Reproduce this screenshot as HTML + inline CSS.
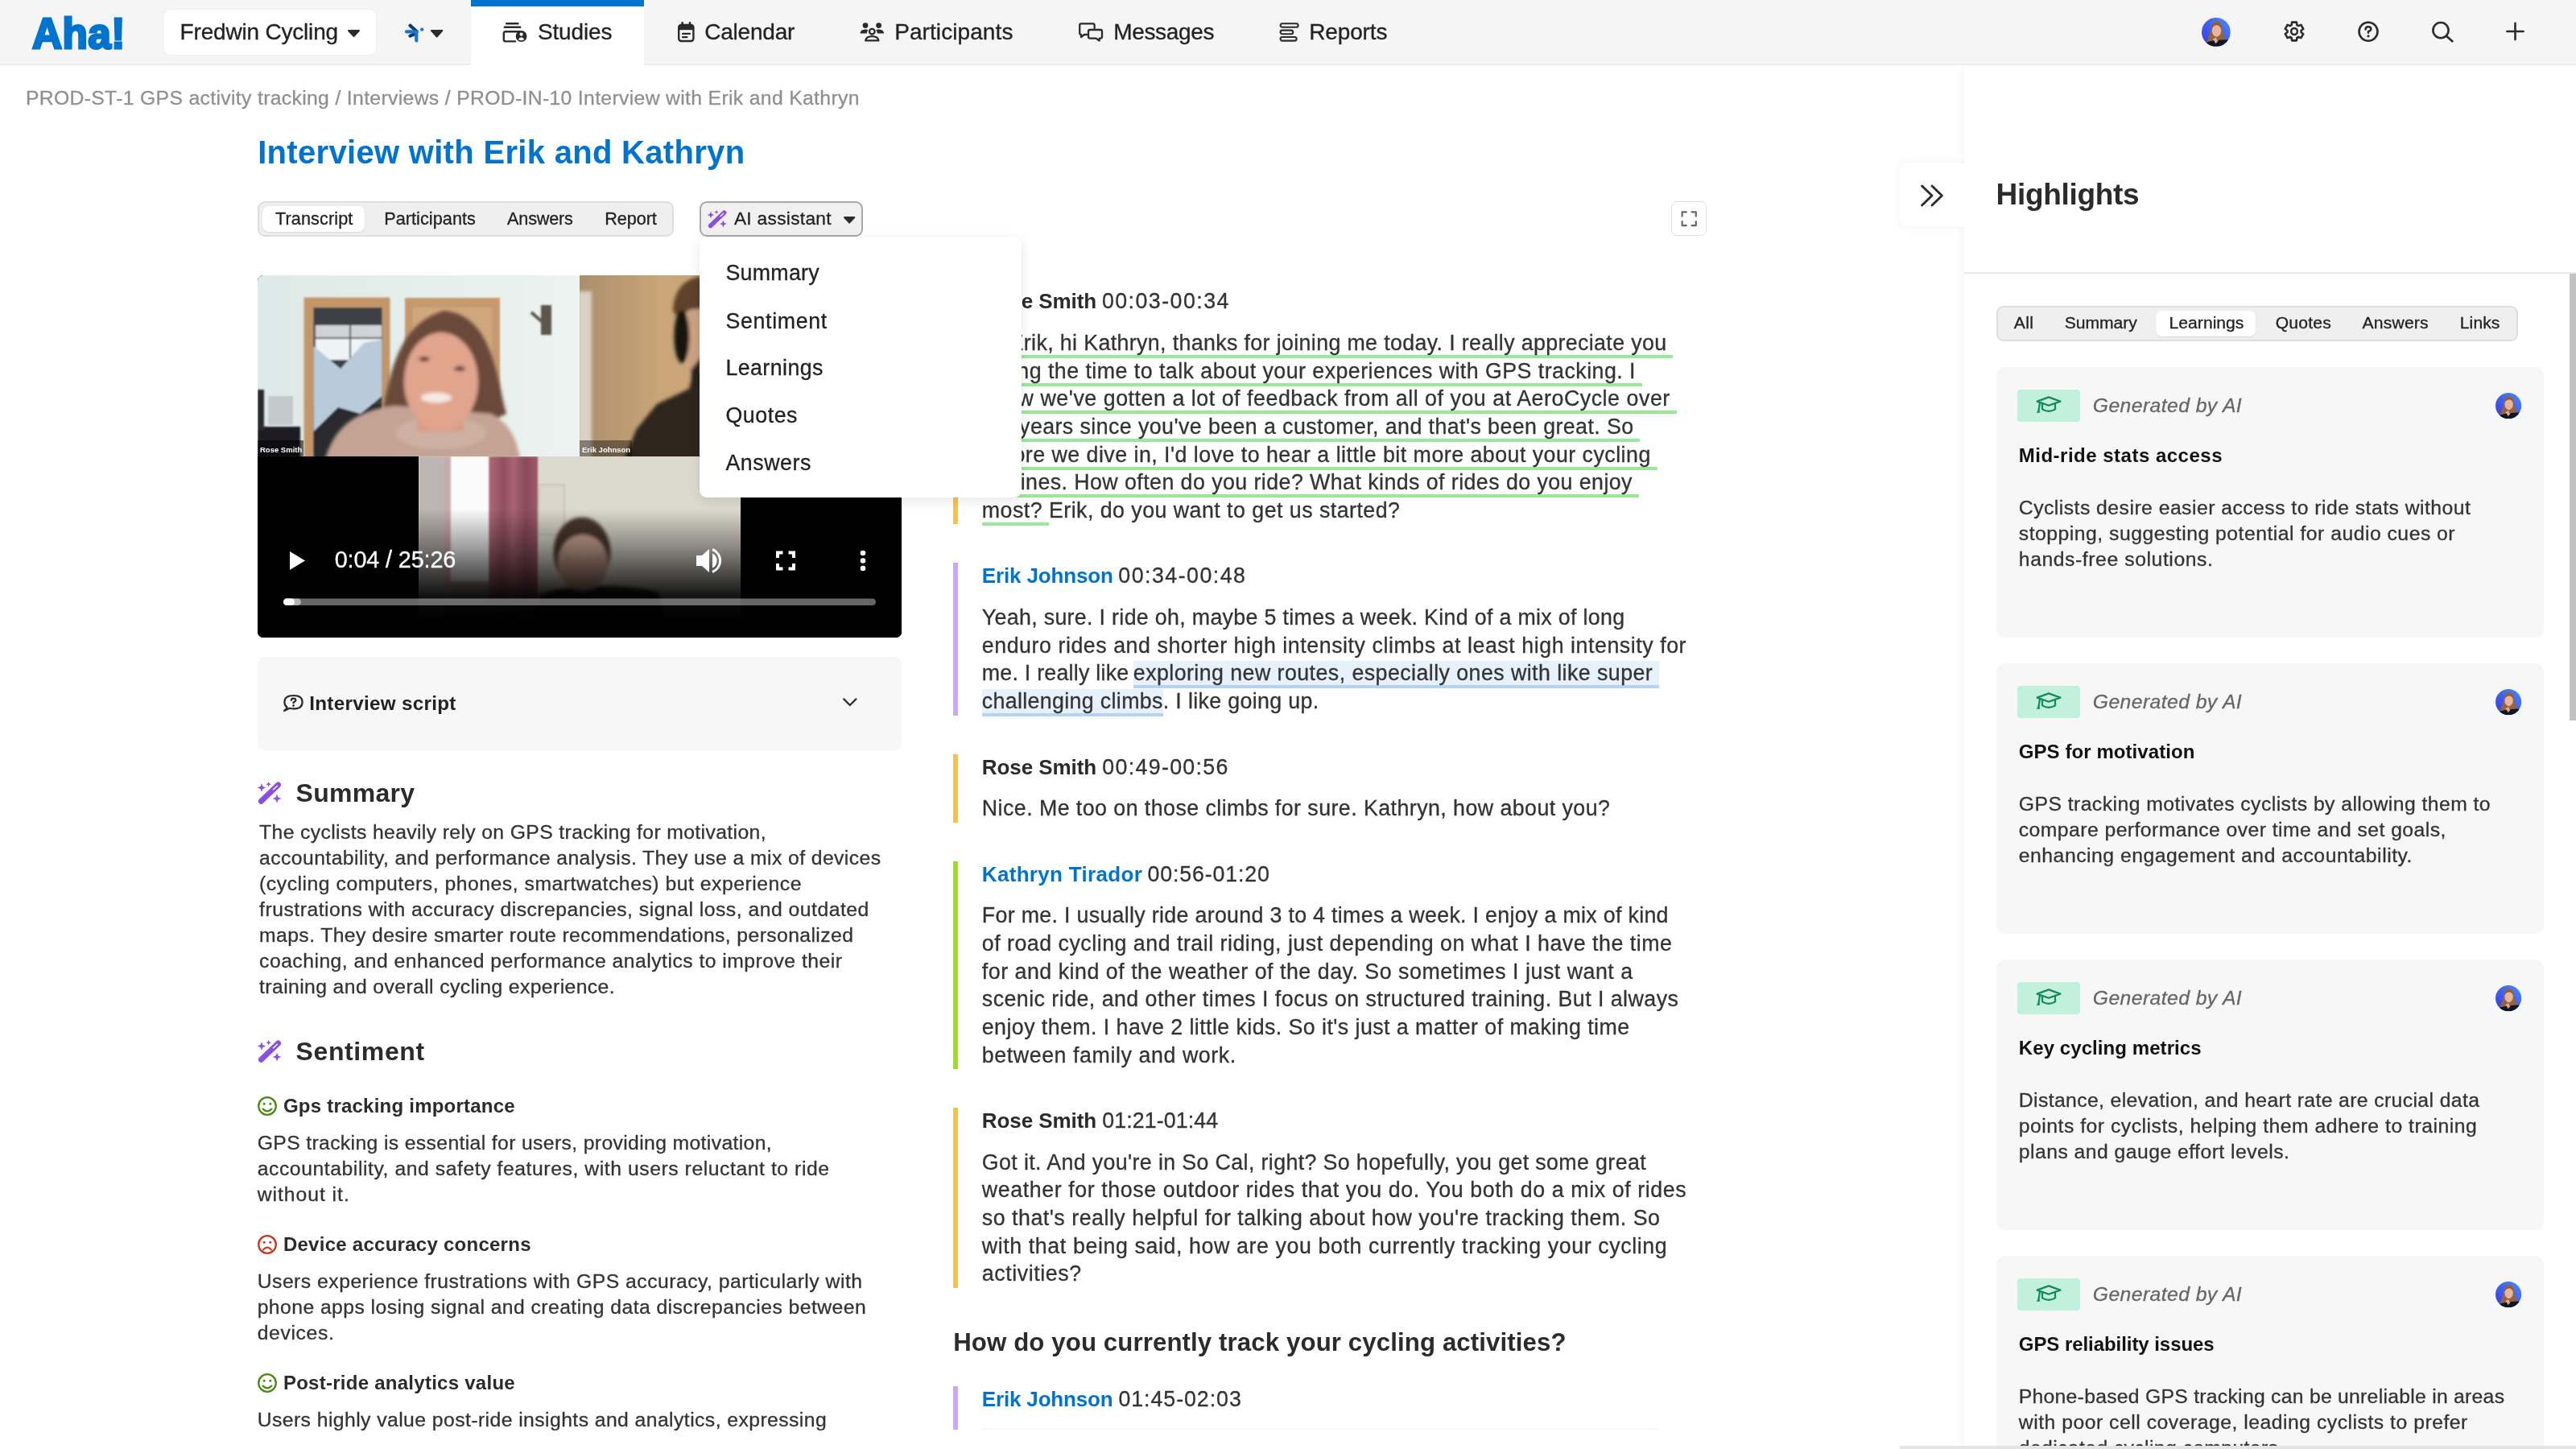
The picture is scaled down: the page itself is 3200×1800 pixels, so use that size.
<!DOCTYPE html>
<html lang="en"><head><meta charset="utf-8"><title>Interview with Erik and Kathryn</title>
<style>
*{box-sizing:border-box;margin:0;padding:0}
html,body{width:3200px;height:1800px;overflow:hidden;background:#fff}
body{position:relative;font-family:"Liberation Sans",sans-serif;color:#333}
.t{position:absolute;white-space:pre;z-index:5;-webkit-text-stroke:.3px}
.a{position:absolute}
.g{border-bottom:4px solid #97ea97;padding-bottom:0}
.b{background:#e7f1fb;border-bottom:4px solid #b5d3f2;padding:0}
svg{position:absolute;overflow:visible}
.bar{position:absolute;left:1184px;width:6px}
.card{position:absolute;left:2480px;width:680px;height:336px;background:#f7f7f7;border-radius:10px}
.badge{position:absolute;left:2506px;width:78px;height:40px;background:#c2f0dc;border-radius:4px}
</style></head><body><div id="root" style="position:absolute;left:0;top:0;width:3200px;height:1800px;will-change:transform">

<!-- NAV -->
<div class="a" style="left:0;top:0;width:3200px;height:81px;background:#f5f5f5;border-bottom:2px solid #ececec"></div>
<div class="a" style="left:585px;top:0;width:215px;height:82px;background:#fff;border-top:8px solid #0073cf"></div>
<div class="a" style="left:204px;top:12px;width:263px;height:56px;background:#fff;border-radius:8px;box-shadow:0 0 2px rgba(0,0,0,.08)"></div>
<div class="a" style="left:40px;top:10.7px;font-size:54px;line-height:60px;font-weight:700;color:#0073cf;letter-spacing:.5px;-webkit-text-stroke:3px #0073cf;transform:scaleX(.95);transform-origin:left;white-space:pre;z-index:6">Aha!</div>
<svg class="a" style="left:431.5px;top:36.5px;z-index:6" width="15.0" height="8.5" viewBox="0 0 15.0 8.5" ><path d="M1 1 L14.0 1 L7.50 8.0 Z" fill="#2b2b2b" stroke="#2b2b2b" stroke-width="2" stroke-linejoin="round"/></svg>
<svg class="a" style="left:500px;top:26px;z-index:6" width="32" height="30" viewBox="0 0 32 30" ><g fill="none" stroke-linecap="round" stroke-width="4.200">
<path d="M9.500 5.800 L17.600 13" stroke="#0b3a75"/><path d="M9.500 18.600 L16.300 15.800" stroke="#0b3a75"/>
<path d="M5 13.300 L17.600 13.600" stroke="#1a74d8"/><path d="M17.300 14.500 L17.300 24.600" stroke="#1a74d8"/></g>
<circle cx="24.200" cy="10.600" r="2.200" fill="#1a74d8"/></svg>
<svg class="a" style="left:534.5px;top:37px;z-index:6" width="15.3" height="9" viewBox="0 0 15.3 9" ><path d="M1 1 L14.3 1 L7.65 8.5 Z" fill="#2b2b2b" stroke="#2b2b2b" stroke-width="2" stroke-linejoin="round"/></svg>
<svg class="a" style="left:622px;top:26px;z-index:6" width="36" height="30" viewBox="0 0 36 30" ><g fill="none" stroke="#2b2b2b" stroke-width="2.400" stroke-linecap="round">
<path d="M7.200 3.200 L21.400 3.200"/><path d="M4.800 7.700 L24.200 7.700"/>
<path d="M18 25.400 L6.200 25.400 Q3.800 25.400 3.800 23 L3.800 15.600 Q3.800 13.200 6.200 13.200 L22.600 13.200 Q24.600 13.200 25 14"/></g>
<circle cx="25.600" cy="19" r="6.900" fill="#2b2b2b"/><circle cx="25.600" cy="16.600" r="2.100" fill="#fff"/><path d="M21.800 23 Q25.600 17.400 29.400 23 Q25.600 25.600 21.800 23Z" fill="#fff"/></svg>
<svg class="a" style="left:840px;top:26px;z-index:6" width="26" height="28" viewBox="0 0 26 28" ><rect x="3.200" y="5" width="18.200" height="20" rx="3" fill="none" stroke="#2b2b2b" stroke-width="2.400"/>
<rect x="3.200" y="5" width="18.200" height="6.200" fill="#2b2b2b"/><path d="M7.600 2.400 L7.600 6 M17 2.400 L17 6" stroke="#2b2b2b" stroke-width="2.600" stroke-linecap="round"/>
<path d="M8 15.800 L17 15.800 M8 20.200 L13.400 20.200" stroke="#2b2b2b" stroke-width="2.200" stroke-linecap="round"/></svg>
<svg class="a" style="left:1066px;top:26px;z-index:6" width="34" height="28" viewBox="0 0 34 28" ><circle cx="9" cy="5.600" r="3.400" fill="#2b2b2b"/><circle cx="25.600" cy="5.600" r="3.400" fill="#2b2b2b"/>
<path d="M2.400 15.400 Q3 10.600 9 10.400 Q11.600 10.400 12.400 11.400 Q10.600 13.400 11 15.400 Z" fill="#2b2b2b"/>
<path d="M32.200 15.400 Q31.600 10.600 25.600 10.400 Q23 10.400 22.200 11.400 Q24 13.400 23.600 15.400 Z" fill="#2b2b2b"/>
<circle cx="17.300" cy="13.200" r="3.300" fill="none" stroke="#2b2b2b" stroke-width="2.300"/>
<path d="M9.200 24.400 Q10 19.200 17.300 19.200 Q24.600 19.200 25.400 24.400 Z" fill="none" stroke="#2b2b2b" stroke-width="2.300" stroke-linejoin="round"/></svg>
<svg class="a" style="left:1338px;top:26px;z-index:6" width="34" height="28" viewBox="0 0 34 28" ><g fill="none" stroke="#2b2b2b" stroke-width="2.300" stroke-linejoin="round" stroke-linecap="round">
<path d="M12 17 L9 17 L5 20 L5 17 Q3.200 17 3.200 15 L3.200 5.400 Q3.200 3.400 5.200 3.400 L19.600 3.400 Q21.600 3.400 21.600 5.400 L21.600 9"/>
<path d="M16 11 L29 11 Q31 11 31 13 L31 19.600 Q31 21.600 29 21.600 L27.600 21.600 L27.600 24.600 L23.400 21.600 L16 21.600 Q14 21.600 14 19.600 L14 13 Q14 11 16 11Z"/></g></svg>
<svg class="a" style="left:1588px;top:26px;z-index:6" width="28" height="28" viewBox="0 0 28 28" ><g fill="none" stroke="#2b2b2b" stroke-width="2.100">
<rect x="2.600" y="3.200" width="22" height="4.600" rx="2.300"/><rect x="2.600" y="11.600" width="15.600" height="4.600" rx="2.300"/><rect x="2.600" y="20" width="20" height="4.600" rx="2.300"/></g></svg>
<svg class="a" style="left:2735.1px;top:22.0px;z-index:6" width="35.8" height="35.8" viewBox="0 0 35.8 35.8" ><defs><clipPath id="av275339"><circle cx="17.9" cy="17.9" r="17.9"/></clipPath>
<linearGradient id="ag275339" x1="1" y1="0" x2="0" y2="1"><stop offset="0" stop-color="#4a8af8"/><stop offset=".5" stop-color="#3f62f0"/><stop offset="1" stop-color="#3636e4"/></linearGradient>
<filter id="af275339" x="-20%" y="-20%" width="140%" height="140%"><feGaussianBlur stdDeviation=".5"/></filter></defs>
<g clip-path="url(#av275339)"><g transform="scale(0.994)"><rect width="36" height="36" fill="url(#ag275339)"/>
<g filter="url(#af275339)"><path d="M5.500 32 C8 26 11 18 12.500 11 C13.500 6 16 4 18.500 4.200 C22 4.200 24.500 6.500 25.500 11 C26.500 18 28 24 30.500 28.500 L30 36 L5 36 Z" fill="#94633f"/>
<ellipse cx="18.600" cy="15.600" rx="5.800" ry="8.200" fill="#e6b59c"/>
<path d="M12.800 14 C13 8 15.500 6.600 18.600 6.800 C22 6.800 24.200 9 24.400 14 C22.500 10 20.500 9 18 9.400 C15.500 9.800 14 11 12.800 14 Z" fill="#8a5a3a"/>
<path d="M14 27 L18 24.500 L20 30 L15 33 Z" fill="#e0ae96"/>
<path d="M4 31.500 C9 30 13 29 15.500 28.500 L17.500 33 L21.500 28 C25 27.600 29 27.600 32.500 27.400 L34 36 L2 36 Z" fill="#0b1428"/></g></g></g></svg>
<svg class="a" style="left:2836.4px;top:25.200000000000003px;z-index:6" width="28" height="28" viewBox="0 0 28 28" ><path d="M11.11 2.66 L16.89 2.66 L17.35 6.08 L19.19 7.14 L22.37 5.83 L25.26 10.84 L22.53 12.94 L22.53 15.06 L25.26 17.16 L22.37 22.17 L19.19 20.86 L17.35 21.92 L16.89 25.34 L11.11 25.34 L10.65 21.92 L8.81 20.86 L5.63 22.17 L2.74 17.16 L5.47 15.06 L5.47 12.94 L2.74 10.84 L5.63 5.83 L8.81 7.14 L10.65 6.08Z" fill="none" stroke="#2b2b2b" stroke-width="2.600" stroke-linejoin="round"/><circle cx="14" cy="14" r="3.900" fill="none" stroke="#2b2b2b" stroke-width="2.500"/></svg>
<svg class="a" style="left:2928px;top:25px;z-index:6" width="28" height="28" viewBox="0 0 28 28" ><circle cx="14" cy="14.200" r="11.500" fill="none" stroke="#2b2b2b" stroke-width="2.600"/><path d="M10.600 11.400 Q10.600 8.200 14 8.200 Q17.400 8.200 17.400 11 Q17.400 13 14 14.200 L14 15.800" fill="none" stroke="#2b2b2b" stroke-width="2.500" stroke-linecap="round"/><circle cx="14" cy="19.800" r="1.600" fill="#2b2b2b"/></svg>
<svg class="a" style="left:3018px;top:24px;z-index:6" width="32" height="32" viewBox="0 0 32 32" ><circle cx="14" cy="13.600" r="9.600" fill="none" stroke="#2b2b2b" stroke-width="2.600"/><path d="M21 20.800 L28.400 27.200" stroke="#2b2b2b" stroke-width="2.800" stroke-linecap="round"/></svg>
<svg class="a" style="left:3112px;top:26px;z-index:6" width="26" height="26" viewBox="0 0 26 26" ><path d="M2.400 13 L22.600 13 M12.500 2.900 L12.500 23.100" stroke="#2b2b2b" stroke-width="2.600" stroke-linecap="round"/></svg>

<!-- tabs -->
<div class="a" style="left:320px;top:250px;width:517px;height:44px;background:#efefef;border:2px solid #dedede;border-radius:9px"></div>
<div class="a" style="left:326px;top:256px;width:127px;height:32px;background:#fff;border-radius:8px;box-shadow:0 1px 2px rgba(0,0,0,.1)"></div>
<div class="a" style="left:869px;top:250px;width:203px;height:44px;background:#f0f0f0;border:2px solid #a8a8a8;border-radius:9px"></div>
<div class="a" style="left:2076px;top:250px;width:44px;height:43px;background:#fff;border:1.5px solid #dedede;border-radius:7px"></div>
<svg class="a" style="left:879px;top:261px;z-index:6" width="24" height="23" viewBox="0 0 24 23" ><g transform="scale(1.0)"><path d="M3.600 19.600 L20.600 3.200" stroke="#8b4fe0" stroke-width="5.600" stroke-linecap="round"/><path d="M15.800 7.800 L19.600 4.200" stroke="#fff" stroke-width="1.200" stroke-linecap="round"/><path d="M4.00 1.80 L5.18 4.82 L8.20 6.00 L5.18 7.18 L4.00 10.20 L2.82 7.18 L-0.20 6.00 L2.82 4.82Z" fill="#8b4fe0"/><path d="M11.00 0.00 L11.73 1.87 L13.60 2.60 L11.73 3.33 L11.00 5.20 L10.27 3.33 L8.40 2.60 L10.27 1.87Z" fill="#8b4fe0"/><path d="M19.40 12.60 L20.63 15.77 L23.80 17.00 L20.63 18.23 L19.40 21.40 L18.17 18.23 L15.00 17.00 L18.17 15.77Z" fill="#8b4fe0"/></g></svg>
<svg class="a" style="left:1048px;top:269px;z-index:6" width="14.3" height="8.2" viewBox="0 0 14.3 8.2" ><path d="M1 1 L13.3 1 L7.15 7.7 Z" fill="#2b2b2b" stroke="#2b2b2b" stroke-width="2" stroke-linejoin="round"/></svg>
<svg class="a" style="left:2086px;top:260px;z-index:6" width="24" height="24" viewBox="0 0 24 24" ><g fill="none" stroke="#666" stroke-width="2.200" stroke-linecap="round" stroke-linejoin="round"><path d="M3.600 8.600 L3.600 3.400 L8.800 3.400"/><path d="M15.600 3.400 L20.800 3.400 L20.800 8.600"/><path d="M3.600 15.200 L3.600 20.200 L8.800 20.200"/><path d="M15.600 20.200 L20.800 20.200 L20.800 15.200"/></g></svg>
<svg class="a" style="left:350px;top:860px;z-index:6" width="28" height="26" viewBox="0 0 28 26" ><path d="M6.600 18.600 Q3.400 16 3.400 12.200 Q3.400 4 14.600 4 Q25.600 4 25.600 12.200 Q25.600 20.400 14.600 20.400 Q12 20.400 9.800 19.800 L3 23 Q5.600 20.800 6.600 18.600Z" fill="none" stroke="#2b2b2b" stroke-width="2.200" stroke-linejoin="round"/><path d="M11.800 10 Q11.800 7.600 14.600 7.600 Q17.400 7.600 17.400 9.800 Q17.400 11.400 14.600 12.400 L14.600 13.400" fill="none" stroke="#2b2b2b" stroke-width="2.100" stroke-linecap="round"/><circle cx="14.600" cy="16.600" r="1.400" fill="#2b2b2b"/></svg>
<svg class="a" style="left:1044px;top:864px;z-index:6" width="24" height="16" viewBox="0 0 24 16" ><path d="M4.200 4.400 L11.800 12 L19.400 4.400" fill="none" stroke="#2b2b2b" stroke-width="2.200" stroke-linecap="round" stroke-linejoin="round"/></svg>
<svg class="a" style="left:320px;top:971px;z-index:6" width="30" height="29" viewBox="0 0 30 29" ><g transform="scale(1.24)"><path d="M3.600 19.600 L20.600 3.200" stroke="#8b4fe0" stroke-width="5.600" stroke-linecap="round"/><path d="M15.800 7.800 L19.600 4.200" stroke="#fff" stroke-width="1.200" stroke-linecap="round"/><path d="M4.00 1.80 L5.18 4.82 L8.20 6.00 L5.18 7.18 L4.00 10.20 L2.82 7.18 L-0.20 6.00 L2.82 4.82Z" fill="#8b4fe0"/><path d="M11.00 0.00 L11.73 1.87 L13.60 2.60 L11.73 3.33 L11.00 5.20 L10.27 3.33 L8.40 2.60 L10.27 1.87Z" fill="#8b4fe0"/><path d="M19.40 12.60 L20.63 15.77 L23.80 17.00 L20.63 18.23 L19.40 21.40 L18.17 18.23 L15.00 17.00 L18.17 15.77Z" fill="#8b4fe0"/></g></svg>
<svg class="a" style="left:320px;top:1291.5px;z-index:6" width="30" height="29" viewBox="0 0 30 29" ><g transform="scale(1.24)"><path d="M3.600 19.600 L20.600 3.200" stroke="#8b4fe0" stroke-width="5.600" stroke-linecap="round"/><path d="M15.800 7.800 L19.600 4.200" stroke="#fff" stroke-width="1.200" stroke-linecap="round"/><path d="M4.00 1.80 L5.18 4.82 L8.20 6.00 L5.18 7.18 L4.00 10.20 L2.82 7.18 L-0.20 6.00 L2.82 4.82Z" fill="#8b4fe0"/><path d="M11.00 0.00 L11.73 1.87 L13.60 2.60 L11.73 3.33 L11.00 5.20 L10.27 3.33 L8.40 2.60 L10.27 1.87Z" fill="#8b4fe0"/><path d="M19.40 12.60 L20.63 15.77 L23.80 17.00 L20.63 18.23 L19.40 21.40 L18.17 18.23 L15.00 17.00 L18.17 15.77Z" fill="#8b4fe0"/></g></svg>
<svg class="a" style="left:320.2px;top:1362.1px;z-index:6" width="24" height="24" viewBox="0 0 24 24" ><circle cx="12" cy="12" r="10.800" fill="none" stroke="#4b8a12" stroke-width="2.300"/><circle cx="8.200" cy="9.200" r="1.500" fill="#4b8a12"/><circle cx="15.800" cy="9.200" r="1.500" fill="#4b8a12"/><path d="M6.600 15.600 Q12 21 17.400 15.600" fill="none" stroke="#4b8a12" stroke-width="2.200" stroke-linecap="round"/></svg>
<svg class="a" style="left:320.2px;top:1533.8px;z-index:6" width="24" height="24" viewBox="0 0 24 24" ><circle cx="12" cy="12" r="10.800" fill="none" stroke="#c9361e" stroke-width="2.300"/><circle cx="8.200" cy="9.200" r="1.500" fill="#c9361e"/><circle cx="15.800" cy="9.200" r="1.500" fill="#c9361e"/><path d="M7 18.400 Q12 13 17 18.400" fill="none" stroke="#c9361e" stroke-width="2.200" stroke-linecap="round"/></svg>
<svg class="a" style="left:320.2px;top:1706px;z-index:6" width="24" height="24" viewBox="0 0 24 24" ><circle cx="12" cy="12" r="10.800" fill="none" stroke="#4b8a12" stroke-width="2.300"/><circle cx="8.200" cy="9.200" r="1.500" fill="#4b8a12"/><circle cx="15.800" cy="9.200" r="1.500" fill="#4b8a12"/><path d="M6.600 15.600 Q12 21 17.400 15.600" fill="none" stroke="#4b8a12" stroke-width="2.200" stroke-linecap="round"/></svg>

<!-- VIDEO -->
<svg class="a" style="left:320px;top:342px;z-index:10" width="800" height="450" viewBox="0 0 800 450">
<defs>
<clipPath id="vc"><rect x="0" y="0" width="800" height="450" rx="7"/></clipPath>
<clipPath id="p1"><rect x="0" y="0" width="400" height="225"/></clipPath>
<clipPath id="p2"><rect x="400" y="0" width="400" height="225"/></clipPath>
<clipPath id="p3"><rect x="200" y="225" width="400" height="225"/></clipPath>
<linearGradient id="w1" x1="0" x2="1" y1="0" y2="0"><stop offset="0" stop-color="#deeae7"/><stop offset="1" stop-color="#ecf3f0"/></linearGradient>
<linearGradient id="w2" x1="0" x2="1" y1="0" y2="0"><stop offset="0" stop-color="#ab8f6d"/><stop offset=".25" stop-color="#c9a578"/><stop offset=".7" stop-color="#d0a97b"/><stop offset="1" stop-color="#c59e73"/></linearGradient>
<linearGradient id="cu" x1="0" x2="1" y1="0" y2="0"><stop offset="0" stop-color="#b06a78"/><stop offset=".3" stop-color="#8f4f60"/><stop offset=".5" stop-color="#a96473"/><stop offset=".75" stop-color="#8a4b5c"/><stop offset="1" stop-color="#9b5968"/></linearGradient>
<linearGradient id="ov" x1="0" x2="0" y1="0" y2="1"><stop offset=".03" stop-color="#000" stop-opacity="0"/><stop offset=".32" stop-color="#000" stop-opacity=".37"/><stop offset=".527" stop-color="#000" stop-opacity=".67"/><stop offset=".68" stop-color="#000" stop-opacity=".9"/><stop offset=".76" stop-color="#000" stop-opacity=".96"/><stop offset=".87" stop-color="#000" stop-opacity="1"/></linearGradient>
<filter id="bl" x="-20%" y="-20%" width="140%" height="140%"><feGaussianBlur stdDeviation="2.2"/></filter>
<filter id="bl1" x="-20%" y="-20%" width="140%" height="140%"><feGaussianBlur stdDeviation="1"/></filter>
</defs>
<g clip-path="url(#vc)">
<rect width="800" height="450" fill="#000"/>
<!-- panel 1: Rose -->
<g clip-path="url(#p1)">
<rect width="400" height="225" fill="url(#w1)"/>
<g filter="url(#bl1)">
<rect x="57.500" y="27.500" width="107" height="200" fill="#c3966a"/>
<rect x="69.500" y="40" width="85" height="190" fill="#3c4046"/>
<rect x="72" y="62" width="82" height="15" fill="#cdd3d7"/>
<rect x="72" y="79" width="82" height="26" fill="#eef3f5"/>
<rect x="114" y="62" width="2" height="42" fill="#4a4e54"/>
<rect x="69.500" y="160" width="85" height="70" fill="#2a2a2e"/>
<path d="M69.500 88 L103 116 L132 84 L154.500 80 L154.500 150 L128 172 L100 164 L69.500 194 Z" fill="#b9cbdb"/>
<rect x="183" y="28" width="118" height="150" fill="#c69a6e"/>
<rect x="193" y="40" width="98" height="140" fill="#d0a77d"/>
<rect x="352" y="37" width="13" height="37" fill="#5d564c"/>
<path d="M340 46 L356 60" stroke="#5d564c" stroke-width="4"/>
<rect x="0" y="188" width="53" height="40" fill="#1d1d21"/>
<rect x="13" y="150" width="31" height="36" fill="#c3cac9"/>
<rect x="0" y="142" width="8" height="50" fill="#2a2a2e"/>
</g>
<g filter="url(#bl)">
<path d="M155 172 C165 120 175 60 232 44 C290 50 296 120 309 172 C290 185 180 185 155 172 Z" fill="#6a4a3b"/>
<path d="M84 228 C95 190 120 168 170 162 L290 172 C315 185 322 205 326 228 Z" fill="#c4a394"/>
<ellipse cx="228" cy="196" rx="56" ry="20" fill="#cdb0a2"/>
<rect x="198" y="160" width="58" height="34" fill="#d99d86"/>
<ellipse cx="228" cy="132" rx="46" ry="61" fill="#e1a48d"/>
<path d="M182 120 C186 80 205 62 250 62 C270 70 275 100 276 130 C284 100 282 60 240 50 C196 50 180 90 182 120 Z" fill="#6a4a3b"/>
<ellipse cx="222" cy="152" rx="19" ry="6.5" fill="#f4e9e4"/>
<ellipse cx="207" cy="104" rx="7" ry="3" fill="#5a3b32"/>
<ellipse cx="251" cy="116" rx="7" ry="3" fill="#5a3b32"/>
</g>
<rect x="0" y="205" width="57" height="20" fill="#000" fill-opacity=".55"/>
<text x="3" y="219.500" font-family="Liberation Sans, sans-serif" font-weight="700" font-size="9.500" fill="#fff">Rose Smith</text>
</g>
<!-- panel 2: Erik -->
<g clip-path="url(#p2)">
<rect x="400" width="400" height="225" fill="url(#w2)"/>
<g filter="url(#bl)">
<rect x="398" y="20" width="17" height="210" fill="#dbd2c4"/>
<path d="M455 230 L470 192 L496 160 L536 141 L542 118 L800 118 L800 230 Z" fill="#2f251e"/>
<rect x="534" y="36" width="300" height="86" fill="#cda184"/>
<path d="M516 44 C518 14 532 2 560 0 L800 0 L800 40 L540 42 C532 44 528 50 524 56 Z" fill="#61432c"/>
<ellipse cx="527" cy="76" rx="9.500" ry="33" fill="#17130f"/>
<path d="M538 118 L552 100 L552 140 L540 136 Z" fill="#2a211b"/>
</g>
<rect x="400" y="205" width="65" height="20" fill="#000" fill-opacity=".4"/>
<text x="403" y="219.500" font-family="Liberation Sans, sans-serif" font-weight="700" font-size="9.500" fill="#fff">Erik Johnson</text>
</g>
<!-- panel 3: Kathryn -->
<g clip-path="url(#p3)">
<rect x="200" y="225" width="400" height="225" fill="#dcd9cd"/>
<g filter="url(#bl1)">
<rect x="200" y="225" width="33" height="225" fill="#bcb5b3"/>
<rect x="232" y="225" width="9" height="225" fill="#c8a9ad"/>
<rect x="240" y="225" width="48" height="160" fill="#fbfbfb"/>
<rect x="240" y="380" width="48" height="70" fill="#b9a9a4"/>
<rect x="287" y="225" width="61" height="225" fill="url(#cu)"/>
<rect x="349" y="260" width="32" height="62" fill="#dad6ca" stroke="#b5b1a6" stroke-width="1"/>
</g>
<g filter="url(#bl)">
<path d="M335 452 L351 396 C385 384 455 382 498 394 L512 452 Z" fill="#2c2325"/>
<ellipse cx="403" cy="344" rx="35.500" ry="43.500" fill="#4a382f"/>
<ellipse cx="404" cy="357" rx="31" ry="35" fill="#c9a08e"/><ellipse cx="404" cy="338" rx="24" ry="14" fill="#d2aa98"/>
</g>
</g>
<rect x="0" y="285" width="800" height="165" fill="url(#ov)"/>
<!-- controls -->
<path d="M40 343 L40 366 L59 354.500 Z" fill="#fff"/>
<g fill="#fff">
<path d="M545 348 L552 348 L561 340 L561 369 L552 361 L545 361 Z"/>
<path d="M565 345.500 A 10 10 0 0 1 565 363.500 Z"/>
<path d="M565 340.500 A 15 15 0 0 1 565 368.500" fill="none" stroke="#fff" stroke-width="3"/>
</g>
<g fill="none" stroke="#fff" stroke-width="4">
<path d="M646 351 L646 344.500 L652.500 344.500"/><path d="M659.500 344.500 L666 344.500 L666 351"/>
<path d="M646 358 L646 364.500 L652.500 364.500"/><path d="M659.500 364.500 L666 364.500 L666 358"/>
</g>
<circle cx="752" cy="345" r="3.300" fill="#fff"/><circle cx="752" cy="354.500" r="3.300" fill="#fff"/><circle cx="752" cy="364" r="3.300" fill="#fff"/>
<rect x="32" y="401.500" width="736" height="8.500" rx="4.250" fill="#fff" fill-opacity=".4"/>
<rect x="32" y="401.500" width="22" height="8.500" rx="4.250" fill="#fff" fill-opacity=".5"/>
<rect x="32" y="401.500" width="14" height="8.500" rx="4.250" fill="#fff"/>
</g>
</svg>


<!-- interview script -->
<div class="a" style="left:320px;top:816px;width:800px;height:116px;background:#f7f7f7;border-radius:9px"></div>

<!-- transcript bars -->
<div class="bar" style="top:355px;height:296px;background:#f5c251"></div>
<div class="bar" style="top:699px;height:190px;background:#cba8f5"></div>
<div class="bar" style="top:937px;height:85px;background:#f5c251"></div>
<div class="bar" style="top:1070px;height:258px;background:#9edb2c"></div>
<div class="bar" style="top:1376px;height:224px;background:#f5c251"></div>
<div class="bar" style="top:1722px;height:54px;background:#cba8f5"></div>
<div class="a" style="left:1220px;top:1775px;width:840px;height:1px;background:#f3f3f3"></div>

<!-- right panel -->
<div class="a" style="left:2360px;top:202px;width:100px;height:80px;background:#fff;border-radius:10px;box-shadow:0 0 12px rgba(0,0,0,.055)"></div>
<div class="a" style="left:2440px;top:82px;width:760px;height:1718px;background:#fff;box-shadow:0 0 12px rgba(0,0,0,.055);clip-path:inset(0 0 0 -30px)"></div>
<div class="a" style="left:2424px;top:203px;width:46px;height:78px;background:#fff"></div>
<div class="a" style="left:2440px;top:338px;width:760px;height:2px;background:#e9e9e9"></div>
<div class="a" style="left:3192px;top:340px;width:8px;height:555px;background:#c2c2c2"></div>
<div class="a" style="left:2480px;top:380px;width:648px;height:44px;background:#efefef;border:2px solid #dedede;border-radius:9px"></div>
<div class="a" style="left:2678px;top:386px;width:124px;height:32px;background:#fff;border-radius:8px;box-shadow:0 1px 2px rgba(0,0,0,.1)"></div>
<div class="card" style="top:456px"></div><div class="badge" style="top:484px"></div>
<div class="card" style="top:824px"></div><div class="badge" style="top:852px"></div>
<div class="card" style="top:1192px"></div><div class="badge" style="top:1220px"></div>
<div class="card" style="top:1560px"></div><div class="badge" style="top:1588px"></div>
<svg class="a" style="left:2384px;top:228px;z-index:6" width="32" height="30" viewBox="0 0 32 30" ><g fill="none" stroke="#2b2b2b" stroke-width="2.900" stroke-linecap="round" stroke-linejoin="round"><path d="M3.600 3 L16 15 L3.600 27"/><path d="M16 3 L28.400 15 L16 27"/></g></svg>
<svg class="a" style="left:2528px;top:491px;z-index:6" width="34" height="24" viewBox="0 0 34 24" ><g fill="none" stroke="#128a5a" stroke-width="2.200" stroke-linejoin="round" stroke-linecap="round"><path d="M2.600 7.600 L17 2.400 L31.400 7.600 L17 12.800 Z"/><path d="M9 11 L9 17.400 Q17 22.400 25 17.400 L25 11"/><path d="M6 9.200 L4.400 19.600"/></g><path d="M4.400 17 L1.800 22 L6.400 21.600Z" fill="#128a5a"/></svg>
<svg class="a" style="left:3099.7000000000003px;top:488.0px;z-index:6" width="32.2" height="32.2" viewBox="0 0 32.2 32.2" ><defs><clipPath id="av3115504"><circle cx="16.1" cy="16.1" r="16.1"/></clipPath>
<linearGradient id="ag3115504" x1="1" y1="0" x2="0" y2="1"><stop offset="0" stop-color="#4a8af8"/><stop offset=".5" stop-color="#3f62f0"/><stop offset="1" stop-color="#3636e4"/></linearGradient>
<filter id="af3115504" x="-20%" y="-20%" width="140%" height="140%"><feGaussianBlur stdDeviation=".5"/></filter></defs>
<g clip-path="url(#av3115504)"><g transform="scale(0.894)"><rect width="36" height="36" fill="url(#ag3115504)"/>
<g filter="url(#af3115504)"><path d="M5.500 32 C8 26 11 18 12.500 11 C13.500 6 16 4 18.500 4.200 C22 4.200 24.500 6.500 25.500 11 C26.500 18 28 24 30.500 28.500 L30 36 L5 36 Z" fill="#94633f"/>
<ellipse cx="18.600" cy="15.600" rx="5.800" ry="8.200" fill="#e6b59c"/>
<path d="M12.800 14 C13 8 15.500 6.600 18.600 6.800 C22 6.800 24.200 9 24.400 14 C22.500 10 20.500 9 18 9.400 C15.500 9.800 14 11 12.800 14 Z" fill="#8a5a3a"/>
<path d="M14 27 L18 24.500 L20 30 L15 33 Z" fill="#e0ae96"/>
<path d="M4 31.500 C9 30 13 29 15.500 28.500 L17.500 33 L21.500 28 C25 27.600 29 27.600 32.500 27.400 L34 36 L2 36 Z" fill="#0b1428"/></g></g></g></svg>
<svg class="a" style="left:2528px;top:859px;z-index:6" width="34" height="24" viewBox="0 0 34 24" ><g fill="none" stroke="#128a5a" stroke-width="2.200" stroke-linejoin="round" stroke-linecap="round"><path d="M2.600 7.600 L17 2.400 L31.400 7.600 L17 12.800 Z"/><path d="M9 11 L9 17.400 Q17 22.400 25 17.400 L25 11"/><path d="M6 9.200 L4.400 19.600"/></g><path d="M4.400 17 L1.800 22 L6.400 21.600Z" fill="#128a5a"/></svg>
<svg class="a" style="left:3099.7000000000003px;top:856.0px;z-index:6" width="32.2" height="32.2" viewBox="0 0 32.2 32.2" ><defs><clipPath id="av3115872"><circle cx="16.1" cy="16.1" r="16.1"/></clipPath>
<linearGradient id="ag3115872" x1="1" y1="0" x2="0" y2="1"><stop offset="0" stop-color="#4a8af8"/><stop offset=".5" stop-color="#3f62f0"/><stop offset="1" stop-color="#3636e4"/></linearGradient>
<filter id="af3115872" x="-20%" y="-20%" width="140%" height="140%"><feGaussianBlur stdDeviation=".5"/></filter></defs>
<g clip-path="url(#av3115872)"><g transform="scale(0.894)"><rect width="36" height="36" fill="url(#ag3115872)"/>
<g filter="url(#af3115872)"><path d="M5.500 32 C8 26 11 18 12.500 11 C13.500 6 16 4 18.500 4.200 C22 4.200 24.500 6.500 25.500 11 C26.500 18 28 24 30.500 28.500 L30 36 L5 36 Z" fill="#94633f"/>
<ellipse cx="18.600" cy="15.600" rx="5.800" ry="8.200" fill="#e6b59c"/>
<path d="M12.800 14 C13 8 15.500 6.600 18.600 6.800 C22 6.800 24.200 9 24.400 14 C22.500 10 20.500 9 18 9.400 C15.500 9.800 14 11 12.800 14 Z" fill="#8a5a3a"/>
<path d="M14 27 L18 24.500 L20 30 L15 33 Z" fill="#e0ae96"/>
<path d="M4 31.500 C9 30 13 29 15.500 28.500 L17.500 33 L21.500 28 C25 27.600 29 27.600 32.500 27.400 L34 36 L2 36 Z" fill="#0b1428"/></g></g></g></svg>
<svg class="a" style="left:2528px;top:1227px;z-index:6" width="34" height="24" viewBox="0 0 34 24" ><g fill="none" stroke="#128a5a" stroke-width="2.200" stroke-linejoin="round" stroke-linecap="round"><path d="M2.600 7.600 L17 2.400 L31.400 7.600 L17 12.800 Z"/><path d="M9 11 L9 17.400 Q17 22.400 25 17.400 L25 11"/><path d="M6 9.200 L4.400 19.600"/></g><path d="M4.400 17 L1.800 22 L6.400 21.600Z" fill="#128a5a"/></svg>
<svg class="a" style="left:3099.7000000000003px;top:1224.0px;z-index:6" width="32.2" height="32.2" viewBox="0 0 32.2 32.2" ><defs><clipPath id="av31151240"><circle cx="16.1" cy="16.1" r="16.1"/></clipPath>
<linearGradient id="ag31151240" x1="1" y1="0" x2="0" y2="1"><stop offset="0" stop-color="#4a8af8"/><stop offset=".5" stop-color="#3f62f0"/><stop offset="1" stop-color="#3636e4"/></linearGradient>
<filter id="af31151240" x="-20%" y="-20%" width="140%" height="140%"><feGaussianBlur stdDeviation=".5"/></filter></defs>
<g clip-path="url(#av31151240)"><g transform="scale(0.894)"><rect width="36" height="36" fill="url(#ag31151240)"/>
<g filter="url(#af31151240)"><path d="M5.500 32 C8 26 11 18 12.500 11 C13.500 6 16 4 18.500 4.200 C22 4.200 24.500 6.500 25.500 11 C26.500 18 28 24 30.500 28.500 L30 36 L5 36 Z" fill="#94633f"/>
<ellipse cx="18.600" cy="15.600" rx="5.800" ry="8.200" fill="#e6b59c"/>
<path d="M12.800 14 C13 8 15.500 6.600 18.600 6.800 C22 6.800 24.200 9 24.400 14 C22.500 10 20.500 9 18 9.400 C15.500 9.800 14 11 12.800 14 Z" fill="#8a5a3a"/>
<path d="M14 27 L18 24.500 L20 30 L15 33 Z" fill="#e0ae96"/>
<path d="M4 31.500 C9 30 13 29 15.500 28.500 L17.500 33 L21.500 28 C25 27.600 29 27.600 32.500 27.400 L34 36 L2 36 Z" fill="#0b1428"/></g></g></g></svg>
<svg class="a" style="left:2528px;top:1595px;z-index:6" width="34" height="24" viewBox="0 0 34 24" ><g fill="none" stroke="#128a5a" stroke-width="2.200" stroke-linejoin="round" stroke-linecap="round"><path d="M2.600 7.600 L17 2.400 L31.400 7.600 L17 12.800 Z"/><path d="M9 11 L9 17.400 Q17 22.400 25 17.400 L25 11"/><path d="M6 9.200 L4.400 19.600"/></g><path d="M4.400 17 L1.800 22 L6.400 21.600Z" fill="#128a5a"/></svg>
<svg class="a" style="left:3099.7000000000003px;top:1592.0px;z-index:6" width="32.2" height="32.2" viewBox="0 0 32.2 32.2" ><defs><clipPath id="av31151608"><circle cx="16.1" cy="16.1" r="16.1"/></clipPath>
<linearGradient id="ag31151608" x1="1" y1="0" x2="0" y2="1"><stop offset="0" stop-color="#4a8af8"/><stop offset=".5" stop-color="#3f62f0"/><stop offset="1" stop-color="#3636e4"/></linearGradient>
<filter id="af31151608" x="-20%" y="-20%" width="140%" height="140%"><feGaussianBlur stdDeviation=".5"/></filter></defs>
<g clip-path="url(#av31151608)"><g transform="scale(0.894)"><rect width="36" height="36" fill="url(#ag31151608)"/>
<g filter="url(#af31151608)"><path d="M5.500 32 C8 26 11 18 12.500 11 C13.500 6 16 4 18.500 4.200 C22 4.200 24.500 6.500 25.500 11 C26.500 18 28 24 30.500 28.500 L30 36 L5 36 Z" fill="#94633f"/>
<ellipse cx="18.600" cy="15.600" rx="5.800" ry="8.200" fill="#e6b59c"/>
<path d="M12.800 14 C13 8 15.500 6.600 18.600 6.800 C22 6.800 24.200 9 24.400 14 C22.500 10 20.500 9 18 9.400 C15.500 9.800 14 11 12.800 14 Z" fill="#8a5a3a"/>
<path d="M14 27 L18 24.500 L20 30 L15 33 Z" fill="#e0ae96"/>
<path d="M4 31.500 C9 30 13 29 15.500 28.500 L17.500 33 L21.500 28 C25 27.600 29 27.600 32.500 27.400 L34 36 L2 36 Z" fill="#0b1428"/></g></g></g></svg>
<div class="a" style="left:2360px;top:1796px;width:840px;height:4px;background:#e4e4e4;z-index:40"></div>
<div class="a" style="left:0;top:1777px;width:2360px;height:23px;background:#fff;z-index:40"></div>

<!-- dropdown -->
<div class="a" style="left:869px;top:294px;width:400px;height:324px;background:#fff;border-radius:9px;box-shadow:0 4px 14px rgba(0,0,0,.10);z-index:20"></div>

<div class="t" style="left:223.6px;top:22px;font-size:28.0px;line-height:35px;color:#222;letter-spacing:-0.191px;">Fredwin Cycling</div>
<div class="t" style="left:668.0px;top:22px;font-size:28.0px;line-height:35px;color:#222;letter-spacing:-0.168px;">Studies</div>
<div class="t" style="left:875.2px;top:22px;font-size:28.0px;line-height:35px;color:#222;letter-spacing:-0.206px;">Calendar</div>
<div class="t" style="left:1111.2px;top:22px;font-size:28.0px;line-height:35px;color:#222;letter-spacing:0.082px;">Participants</div>
<div class="t" style="left:1383.2px;top:22px;font-size:28.0px;line-height:35px;color:#222;letter-spacing:-0.346px;">Messages</div>
<div class="t" style="left:1626.2px;top:22px;font-size:28.0px;line-height:35px;color:#222;letter-spacing:-0.141px;">Reports</div>
<div class="t" style="left:31.9px;top:106px;font-size:24.72px;line-height:31px;color:#8f8f8f;letter-spacing:0.341px;">PROD-ST-1 GPS activity tracking / Interviews / PROD-IN-10 Interview with Erik and Kathryn</div>
<div class="t" style="left:320.2px;top:165px;font-size:40.0px;line-height:48px;font-weight:700;-webkit-text-stroke:0;color:#0073cf;letter-spacing:0.307px;">Interview with Erik and Kathryn</div>
<div class="t" style="left:341.9px;top:257px;font-size:21.63px;line-height:29px;color:#222;letter-spacing:0.119px;">Transcript</div>
<div class="t" style="left:477.2px;top:257px;font-size:21.63px;line-height:29px;color:#222;letter-spacing:0.065px;">Participants</div>
<div class="t" style="left:630.1px;top:257px;font-size:21.63px;line-height:29px;color:#222;letter-spacing:-0.204px;">Answers</div>
<div class="t" style="left:751.2px;top:257px;font-size:21.63px;line-height:29px;color:#222;letter-spacing:-0.044px;">Report</div>
<div class="t" style="left:911.9px;top:256px;font-size:22.66px;line-height:30px;color:#222;letter-spacing:0.326px;">AI assistant</div>
<div class="t" style="left:384.2px;top:858px;font-size:24.21px;line-height:31px;font-weight:700;-webkit-text-stroke:0;color:#222;letter-spacing:0.309px;">Interview script</div>
<div class="t" style="left:367.5px;top:965px;font-size:32.0px;line-height:40px;font-weight:700;-webkit-text-stroke:0;color:#2b2b2b;letter-spacing:0.293px;">Summary</div>
<div class="t" style="left:322.1px;top:1018px;font-size:24.72px;line-height:31px;letter-spacing:0.372px;">The cyclists heavily rely on GPS tracking for motivation,</div>
<div class="t" style="left:322.1px;top:1050px;font-size:24.72px;line-height:31px;letter-spacing:0.428px;">accountability, and performance analysis. They use a mix of devices</div>
<div class="t" style="left:322.1px;top:1082px;font-size:24.72px;line-height:31px;letter-spacing:0.528px;">(cycling computers, phones, smartwatches) but experience</div>
<div class="t" style="left:322.1px;top:1114px;font-size:24.72px;line-height:31px;letter-spacing:0.502px;">frustrations with accuracy discrepancies, signal loss, and outdated</div>
<div class="t" style="left:322.1px;top:1146px;font-size:24.72px;line-height:31px;letter-spacing:0.397px;">maps. They desire smarter route recommendations, personalized</div>
<div class="t" style="left:322.1px;top:1178px;font-size:24.72px;line-height:31px;letter-spacing:0.475px;">coaching, and enhanced performance analytics to improve their</div>
<div class="t" style="left:322.1px;top:1210px;font-size:24.72px;line-height:31px;letter-spacing:0.399px;">training and overall cycling experience.</div>
<div class="t" style="left:367.6px;top:1286px;font-size:32.0px;line-height:40px;font-weight:700;-webkit-text-stroke:0;color:#2b2b2b;letter-spacing:0.602px;">Sentiment</div>
<div class="t" style="left:351.9px;top:1358px;font-size:24.0px;line-height:31px;font-weight:700;-webkit-text-stroke:0;color:#2b2b2b;letter-spacing:0.230px;">Gps tracking importance</div>
<div class="t" style="left:319.7px;top:1404px;font-size:24.72px;line-height:31px;letter-spacing:0.364px;">GPS tracking is essential for users, providing motivation,</div>
<div class="t" style="left:319.7px;top:1436px;font-size:24.72px;line-height:31px;letter-spacing:0.565px;">accountability, and safety features, with users reluctant to ride</div>
<div class="t" style="left:319.7px;top:1468px;font-size:24.72px;line-height:31px;letter-spacing:0.968px;">without it.</div>
<div class="t" style="left:351.9px;top:1530px;font-size:24.0px;line-height:31px;font-weight:700;-webkit-text-stroke:0;color:#2b2b2b;letter-spacing:0.264px;">Device accuracy concerns</div>
<div class="t" style="left:319.7px;top:1576px;font-size:24.72px;line-height:31px;letter-spacing:0.491px;">Users experience frustrations with GPS accuracy, particularly with</div>
<div class="t" style="left:319.7px;top:1608px;font-size:24.72px;line-height:31px;letter-spacing:0.439px;">phone apps losing signal and creating data discrepancies between</div>
<div class="t" style="left:319.7px;top:1640px;font-size:24.72px;line-height:31px;letter-spacing:0.630px;">devices.</div>
<div class="t" style="left:351.9px;top:1702px;font-size:24.0px;line-height:31px;font-weight:700;-webkit-text-stroke:0;color:#2b2b2b;letter-spacing:0.264px;">Post-ride analytics value</div>
<div class="t" style="left:319.7px;top:1748px;font-size:24.72px;line-height:31px;letter-spacing:0.434px;">Users highly value post-ride insights and analytics, expressing</div>
<div class="t" style="left:1219.8px;top:357px;font-size:26.0px;line-height:34px;font-weight:700;-webkit-text-stroke:0;color:#2b2b2b;letter-spacing:-0.081px;">Rose Smith</div>
<div class="t" style="left:1368.9px;top:357px;font-size:26.78px;line-height:34px;letter-spacing:1.462px;">00:03-00:34</div>
<div class="t" style="left:1219.8px;top:409px;font-size:26.78px;line-height:34px;letter-spacing:0.370px;"><span class="g">Hi Erik, hi Kathryn, thanks for joining me today. I really appreciate you </span></div>
<div class="t" style="left:1219.8px;top:444px;font-size:26.78px;line-height:34px;letter-spacing:0.464px;"><span class="g">taking the time to talk about your experiences with GPS tracking. I </span></div>
<div class="t" style="left:1219.8px;top:478px;font-size:26.78px;line-height:34px;letter-spacing:0.544px;"><span class="g">know we've gotten a lot of feedback from all of you at AeroCycle over </span></div>
<div class="t" style="left:1219.8px;top:513px;font-size:26.78px;line-height:34px;letter-spacing:0.420px;"><span class="g">the years since you've been a customer, and that's been great. So </span></div>
<div class="t" style="left:1219.8px;top:548px;font-size:26.78px;line-height:34px;letter-spacing:0.477px;"><span class="g">before we dive in, I'd love to hear a little bit more about your cycling </span></div>
<div class="t" style="left:1219.8px;top:582px;font-size:26.78px;line-height:34px;letter-spacing:0.439px;"><span class="g">routines. How often do you ride? What kinds of rides do you enjoy </span></div>
<div class="t" style="left:1219.8px;top:617px;font-size:26.78px;line-height:34px;letter-spacing:0.469px;"><span class="g">most? </span>Erik, do you want to get us started?</div>
<div class="t" style="left:1219.8px;top:698px;font-size:26.0px;line-height:34px;font-weight:700;-webkit-text-stroke:0;color:#0073cf;letter-spacing:-0.146px;">Erik Johnson</div>
<div class="t" style="left:1389.3px;top:698px;font-size:26.78px;line-height:34px;letter-spacing:1.473px;">00:34-00:48</div>
<div class="t" style="left:1219.8px;top:750px;font-size:26.78px;line-height:34px;letter-spacing:0.327px;">Yeah, sure. I ride oh, maybe 5 times a week. Kind of a mix of long</div>
<div class="t" style="left:1219.8px;top:785px;font-size:26.78px;line-height:34px;letter-spacing:0.549px;">enduro rides and shorter high intensity climbs at least high intensity for</div>
<div class="t" style="left:1219.8px;top:819px;font-size:26.78px;line-height:34px;letter-spacing:0.244px;">me. I really like</div>
<div class="t" style="left:1219.8px;top:854px;font-size:26.78px;line-height:34px;letter-spacing:0.349px;"><span class="b">challenging climbs</span>. I like going up.</div>
<div class="t" style="left:1407.8px;top:819px;font-size:26.78px;line-height:34px;letter-spacing:0.443px;"><span class="b">exploring new routes, especially ones with like super </span></div>
<div class="t" style="left:1219.8px;top:936px;font-size:26.0px;line-height:34px;font-weight:700;-webkit-text-stroke:0;color:#2b2b2b;letter-spacing:-0.081px;">Rose Smith</div>
<div class="t" style="left:1369.2px;top:936px;font-size:26.78px;line-height:34px;letter-spacing:1.342px;">00:49-00:56</div>
<div class="t" style="left:1219.8px;top:987px;font-size:26.78px;line-height:34px;letter-spacing:0.448px;">Nice. Me too on those climbs for sure. Kathryn, how about you?</div>
<div class="t" style="left:1219.8px;top:1069px;font-size:26.0px;line-height:34px;font-weight:700;-webkit-text-stroke:0;color:#0073cf;letter-spacing:0.317px;">Kathryn Tirador</div>
<div class="t" style="left:1425.5px;top:1069px;font-size:26.78px;line-height:34px;letter-spacing:0.843px;">00:56-01:20</div>
<div class="t" style="left:1219.8px;top:1120px;font-size:26.78px;line-height:34px;letter-spacing:0.318px;">For me. I usually ride around 3 to 4 times a week. I enjoy a mix of kind</div>
<div class="t" style="left:1219.8px;top:1155px;font-size:26.78px;line-height:34px;letter-spacing:0.503px;">of road cycling and trail riding, just depending on what I have the time</div>
<div class="t" style="left:1219.8px;top:1190px;font-size:26.78px;line-height:34px;letter-spacing:0.519px;">for and kind of the weather of the day. So sometimes I just want a</div>
<div class="t" style="left:1219.8px;top:1224px;font-size:26.78px;line-height:34px;letter-spacing:0.465px;">scenic ride, and other times I focus on structured training. But I always</div>
<div class="t" style="left:1219.8px;top:1259px;font-size:26.78px;line-height:34px;letter-spacing:0.435px;">enjoy them. I have 2 little kids. So it's just a matter of making time</div>
<div class="t" style="left:1219.8px;top:1294px;font-size:26.78px;line-height:34px;letter-spacing:0.582px;">between family and work.</div>
<div class="t" style="left:1219.8px;top:1375px;font-size:26.0px;line-height:34px;font-weight:700;-webkit-text-stroke:0;color:#2b2b2b;letter-spacing:-0.081px;">Rose Smith</div>
<div class="t" style="left:1369.2px;top:1375px;font-size:26.78px;line-height:34px;letter-spacing:0.103px;">01:21-01:44</div>
<div class="t" style="left:1219.8px;top:1427px;font-size:26.78px;line-height:34px;letter-spacing:0.378px;">Got it. And you're in So Cal, right? So hopefully, you get some great</div>
<div class="t" style="left:1219.8px;top:1461px;font-size:26.78px;line-height:34px;letter-spacing:0.594px;">weather for those outdoor rides that you do. You both do a mix of rides</div>
<div class="t" style="left:1219.8px;top:1496px;font-size:26.78px;line-height:34px;letter-spacing:0.514px;">so that's really helpful for talking about how you're tracking them. So</div>
<div class="t" style="left:1219.8px;top:1531px;font-size:26.78px;line-height:34px;letter-spacing:0.601px;">with that being said, how are you both currently tracking your cycling</div>
<div class="t" style="left:1219.8px;top:1565px;font-size:26.78px;line-height:34px;letter-spacing:0.577px;">activities?</div>
<div class="t" style="left:1184.2px;top:1648px;font-size:31.2px;line-height:39px;font-weight:700;-webkit-text-stroke:0;color:#2b2b2b;letter-spacing:0.115px;">How do you currently track your cycling activities?</div>
<div class="t" style="left:1219.8px;top:1721px;font-size:26.0px;line-height:34px;font-weight:700;-webkit-text-stroke:0;color:#0073cf;letter-spacing:-0.164px;">Erik Johnson</div>
<div class="t" style="left:1389.4px;top:1721px;font-size:26.78px;line-height:34px;letter-spacing:0.953px;">01:45-02:03</div>
<div class="t" style="left:2479.5px;top:219px;font-size:37.0px;line-height:45px;font-weight:700;-webkit-text-stroke:0;color:#2b2b2b;letter-spacing:-0.308px;">Highlights</div>
<div class="t" style="left:2501.8px;top:387px;font-size:21.12px;line-height:27px;color:#222;letter-spacing:0.316px;">All</div>
<div class="t" style="left:2564.7px;top:387px;font-size:21.12px;line-height:27px;color:#222;letter-spacing:-0.038px;">Summary</div>
<div class="t" style="left:2694.6px;top:387px;font-size:21.12px;line-height:27px;color:#222;letter-spacing:0.010px;">Learnings</div>
<div class="t" style="left:2826.7px;top:387px;font-size:21.12px;line-height:27px;color:#222;letter-spacing:0.208px;">Quotes</div>
<div class="t" style="left:2934.6px;top:387px;font-size:21.12px;line-height:27px;color:#222;letter-spacing:0.174px;">Answers</div>
<div class="t" style="left:3055.8px;top:387px;font-size:21.12px;line-height:27px;color:#222;letter-spacing:0.080px;">Links</div>
<div class="t" style="left:2599.8px;top:488px;font-size:24.72px;line-height:31px;color:#666;font-style:italic;letter-spacing:0.415px;">Generated by AI</div>
<div class="t" style="left:2507.8px;top:550px;font-size:24.0px;line-height:31px;font-weight:700;-webkit-text-stroke:0;color:#111;letter-spacing:0.496px;">Mid-ride stats access</div>
<div class="t" style="left:2507.8px;top:615px;font-size:24.72px;line-height:31px;letter-spacing:0.479px;">Cyclists desire easier access to ride stats without</div>
<div class="t" style="left:2507.8px;top:647px;font-size:24.72px;line-height:31px;letter-spacing:0.505px;">stopping, suggesting potential for audio cues or</div>
<div class="t" style="left:2507.8px;top:679px;font-size:24.72px;line-height:31px;letter-spacing:0.581px;">hands-free solutions.</div>
<div class="t" style="left:2599.8px;top:856px;font-size:24.72px;line-height:31px;color:#666;font-style:italic;letter-spacing:0.415px;">Generated by AI</div>
<div class="t" style="left:2507.8px;top:918px;font-size:24.0px;line-height:31px;font-weight:700;-webkit-text-stroke:0;color:#111;letter-spacing:0.073px;">GPS for motivation</div>
<div class="t" style="left:2507.8px;top:983px;font-size:24.72px;line-height:31px;letter-spacing:0.451px;">GPS tracking motivates cyclists by allowing them to</div>
<div class="t" style="left:2507.8px;top:1015px;font-size:24.72px;line-height:31px;letter-spacing:0.453px;">compare performance over time and set goals,</div>
<div class="t" style="left:2507.8px;top:1047px;font-size:24.72px;line-height:31px;letter-spacing:0.526px;">enhancing engagement and accountability.</div>
<div class="t" style="left:2599.8px;top:1224px;font-size:24.72px;line-height:31px;color:#666;font-style:italic;letter-spacing:0.415px;">Generated by AI</div>
<div class="t" style="left:2507.8px;top:1286px;font-size:24.0px;line-height:31px;font-weight:700;-webkit-text-stroke:0;color:#111;letter-spacing:0.075px;">Key cycling metrics</div>
<div class="t" style="left:2507.8px;top:1351px;font-size:24.72px;line-height:31px;letter-spacing:0.387px;">Distance, elevation, and heart rate are crucial data</div>
<div class="t" style="left:2507.8px;top:1383px;font-size:24.72px;line-height:31px;letter-spacing:0.513px;">points for cyclists, helping them adhere to training</div>
<div class="t" style="left:2507.8px;top:1415px;font-size:24.72px;line-height:31px;letter-spacing:0.469px;">plans and gauge effort levels.</div>
<div class="t" style="left:2599.8px;top:1592px;font-size:24.72px;line-height:31px;color:#666;font-style:italic;letter-spacing:0.415px;">Generated by AI</div>
<div class="t" style="left:2507.8px;top:1654px;font-size:24.0px;line-height:31px;font-weight:700;-webkit-text-stroke:0;color:#111;letter-spacing:-0.058px;">GPS reliability issues</div>
<div class="t" style="left:2507.8px;top:1719px;font-size:24.72px;line-height:31px;letter-spacing:0.274px;">Phone-based GPS tracking can be unreliable in areas</div>
<div class="t" style="left:2507.8px;top:1751px;font-size:24.72px;line-height:31px;letter-spacing:0.516px;">with poor cell coverage, leading cyclists to prefer</div>
<div class="t" style="left:2507.8px;top:1783px;font-size:24.72px;line-height:31px;letter-spacing:0.394px;">dedicated cycling computers.</div>
<div class="t" style="left:901.4px;top:322px;font-size:26.78px;line-height:34px;color:#222;letter-spacing:0.297px;z-index:30;">Summary</div>
<div class="t" style="left:901.4px;top:382px;font-size:26.78px;line-height:34px;color:#222;letter-spacing:0.673px;z-index:30;">Sentiment</div>
<div class="t" style="left:901.4px;top:440px;font-size:26.78px;line-height:34px;color:#222;letter-spacing:0.442px;z-index:30;">Learnings</div>
<div class="t" style="left:901.4px;top:499px;font-size:26.78px;line-height:34px;color:#222;letter-spacing:0.561px;z-index:30;">Quotes</div>
<div class="t" style="left:901.4px;top:558px;font-size:26.78px;line-height:34px;color:#222;letter-spacing:0.543px;z-index:30;">Answers</div>
<div class="t" style="left:415.7px;top:677px;font-size:28.84px;line-height:36px;color:#fff;letter-spacing:-0.144px;z-index:12;">0:04 / 25:26</div>
</div></body></html>
